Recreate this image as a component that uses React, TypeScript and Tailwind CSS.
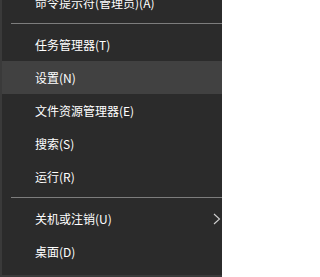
import React from "react";

const Item = ({ label, active = false, arrow = false, className = "" }: { label: string; active?: boolean; arrow?: boolean; className?: string }) => (
  <div className={`relative flex h-[33px] shrink-0 items-center pl-[33px] ${active ? "bg-[#414141]" : ""} ${className}`}>
    <span className="text-[12px] leading-none text-white">{label}</span>
    {arrow && (
      <svg className="absolute right-[1px] top-1/2 -translate-y-1/2" width="8" height="12" viewBox="0 0 8 12" fill="none">
        <path d="M1 1 L6.5 6 L1 11" stroke="#d0d0d0" strokeWidth="1.1" />
      </svg>
    )}
  </div>
);

const Sep = () => (
  <div className="flex h-[9px] shrink-0 items-center pl-[9px]">
    <div className="h-px w-full bg-[#7d7d7d]" />
  </div>
);

export default function App() {
  return (
    <div
      className="flex h-[277px] w-[222px] flex-col overflow-hidden border-b-2 border-l-2 border-[#3a3a3a] bg-[#2b2b2b]"
      style={{ fontFamily: '"Microsoft YaHei", "Noto Sans CJK SC", sans-serif' }}
    >
      <Item label="命令提示符(管理员)(A)" className="-mt-[14px]" />
      <Sep />
      <Item label="任务管理器(T)" />
      <Item label="设置(N)" active />
      <Item label="文件资源管理器(E)" />
      <Item label="搜索(S)" />
      <Item label="运行(R)" />
      <Sep />
      <Item label="关机或注销(U)" arrow />
      <Item label="桌面(D)" />
    </div>
  );
}
